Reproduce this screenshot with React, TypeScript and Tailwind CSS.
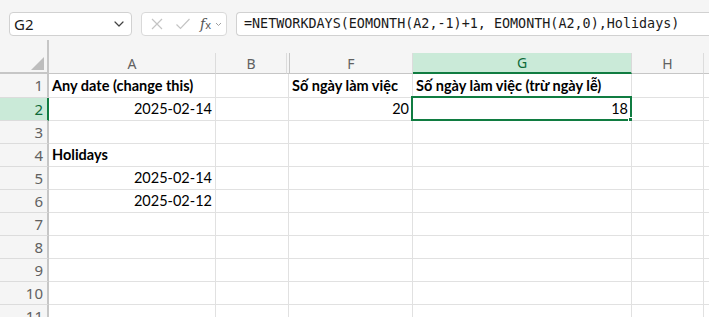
import React from "react";

const cellFont = { fontFamily: "Lato, 'Noto Sans', sans-serif" };

type ColDef = { key: string; cellW: number; headW: number };

const cols: ColDef[] = [
  { key: "A", cellW: 167, headW: 167 },
  { key: "B", cellW: 73, headW: 71 },
  { key: "F", cellW: 124, headW: 123 },
  { key: "G", cellW: 219, headW: 219 },
  { key: "H", cellW: 72, headW: 72 },
  { key: "I", cellW: 60, headW: 60 },
];

type CellVal = { text: string; bold?: boolean; right?: boolean };

const data: Record<number, Record<string, CellVal>> = {
  1: {
    A: { text: "Any date (change this)", bold: true },
    F: { text: "Số ngày làm việc", bold: true },
    G: { text: "Số ngày làm việc (trừ ngày lễ)", bold: true },
  },
  2: {
    A: { text: "2025-02-14", right: true },
    F: { text: "20", right: true },
    G: { text: "18", right: true },
  },
  4: { A: { text: "Holidays", bold: true } },
  5: { A: { text: "2025-02-14", right: true } },
  6: { A: { text: "2025-02-12", right: true } },
};

function Chevron({ className }: { className?: string }) {
  return (
    <svg width="10" height="6" viewBox="0 0 10 6" className={className} fill="none">
      <path d="M1 1l4 4 4-4" stroke="#424242" strokeWidth="1.2" strokeLinecap="round" strokeLinejoin="round" />
    </svg>
  );
}

export default function App() {
  const rows = [1, 2, 3, 4, 5, 6, 7, 8, 9, 10, 11];
  return (
    <div className="w-[709px] h-[317px] overflow-hidden bg-[#f5f5f5] select-none">
      {/* Toolbar */}
      <div className="h-[40px] flex items-start pt-[12px] pl-[9px]">
        <div className="w-[123px] shrink-0 h-[24px] bg-white border border-[#d1d1d1] rounded-[4px] flex items-center justify-between pl-[4px] pr-[7px]">
          <span className="text-[15px] text-[#1a1a1a] leading-none" style={{ fontFamily: "'Noto Sans', sans-serif" }}>G2</span>
          <Chevron />
        </div>
        <div className="ml-[9px] shrink-0 w-[86px] h-[24px] bg-white border border-[#d9d9d9] rounded-[4px] flex items-center pl-[8px]">
          <svg width="14" height="14" viewBox="0 0 14 14" fill="none">
            <path d="M2 2l10 10M12 2L2 12" stroke="#c4c4c4" strokeWidth="1.2" />
          </svg>
          <svg width="16" height="14" viewBox="0 0 16 14" fill="none" className="ml-[11px]">
            <path d="M1.5 7.5l4 4L14.5 2" stroke="#c4c4c4" strokeWidth="1.2" />
          </svg>
          <span className="ml-[9px] text-[14px] italic text-[#555] leading-none" style={{ fontFamily: "'DejaVu Serif', serif" }}>
            f<span className="text-[11px] not-italic" style={{ fontFamily: "'Noto Sans', sans-serif" }}>x</span>
          </span>
          <svg width="7" height="5" viewBox="0 0 7 5" className="ml-[4px]" fill="none">
            <path d="M1 1l2.5 2.5L6 1" stroke="#a0a0a0" strokeWidth="1" />
          </svg>
        </div>
        <div className="ml-[9px] flex-1 h-[24px] bg-white border border-[#d1d1d1] border-r-0 rounded-l-[4px] flex items-center pl-[7px]">
          <span className="text-[13.4px] text-[#1a1a1a] whitespace-nowrap" style={{ fontFamily: "'DejaVu Sans Mono', 'Liberation Mono', monospace" }}>
            =NETWORKDAYS(EOMONTH(A2,-1)+1, EOMONTH(A2,0),Holidays)
          </span>
        </div>
      </div>
      {/* gap strip */}
      <div className="h-[13px] flex">
        <div className="w-[49px] shrink-0 border-r-2 border-[#c6c6c6]" />
      </div>
      {/* Column header */}
      <div className="h-[21px] flex" style={{ fontFamily: "'Noto Sans', sans-serif" }}>
        <div className="w-[49px] shrink-0 h-full border-r-2 border-b-2 border-[#c6c6c6] relative">
          <svg width="13" height="13" viewBox="0 0 13 13" className="absolute right-[3px] bottom-[2px]">
            <path d="M13 0L13 13L0 13Z" fill="#bdbdbd" />
          </svg>
        </div>
        {cols.map((c) => {
          const sel = c.key === "G";
          return (
            <React.Fragment key={c.key}>
              <div
                className={
                  sel
                    ? "h-full shrink-0 flex items-center justify-center bg-[#caead8] border-r border-r-[#d9d9d9] border-b-2 border-b-[#107c41] text-[#0e6b38] text-[14px]"
                    : "h-full shrink-0 flex items-center justify-center border-r border-r-[#dcdcdc] border-b border-b-[#c6c6c6] text-[#616161] text-[14px]"
                }
                style={{ width: c.headW }}
              >
                {c.key !== "I" ? c.key : ""}
              </div>
              {c.key === "B" && (
                <div className="w-[3px] h-full shrink-0 border-r border-r-[#c6c6c6] border-b border-b-[#c6c6c6]" />
              )}
            </React.Fragment>
          );
        })}
      </div>
      {/* Rows */}
      {rows.map((r) => {
        const selRow = r === 2;
        const h = r === 1 ? 24 : 23;
        return (
          <div key={r} className="flex" style={{ height: h }}>
            <div
              className={
                selRow
                  ? "w-[49px] shrink-0 h-full flex items-center justify-end pr-[4px] bg-[#caead8] border-r-2 border-r-[#107c41] border-b border-b-[#dcdcdc] text-[#0e6b38] text-[15px]"
                  : "w-[49px] shrink-0 h-full flex items-center justify-end pr-[4px] border-r-2 border-r-[#c6c6c6] border-b border-b-[#dcdcdc] text-[#616161] text-[15px]"
              }
              style={{ fontFamily: "'Noto Sans', sans-serif" }}
            >
              {r}
            </div>
            {cols.map((c) => {
              const v = data[r]?.[c.key];
              const isSel = r === 2 && c.key === "G";
              return (
                <div
                  key={c.key}
                  className={
                    "h-full shrink-0 bg-white border-r border-b border-[#e1e1e1] relative flex items-end pb-[1px] px-[3px] text-[14.5px] text-black whitespace-nowrap overflow-visible " +
                    (v?.right ? "justify-end" : "justify-start") +
                    (v?.bold ? " font-bold" : "")
                  }
                  style={{ width: c.cellW, ...cellFont }}
                >
                  {v && <span className="leading-[20px]">{v.text}</span>}
                  {isSel && (
                    <>
                      <div className="absolute -left-[2px] -top-[2px] -right-[1px] -bottom-[1px] border-2 border-[#107c41] pointer-events-none" />
                      <div className="absolute -right-[4px] -bottom-[4px] w-[7px] h-[7px] bg-[#107c41] border border-white" />
                    </>
                  )}
                </div>
              );
            })}
          </div>
        );
      })}
    </div>
  );
}
